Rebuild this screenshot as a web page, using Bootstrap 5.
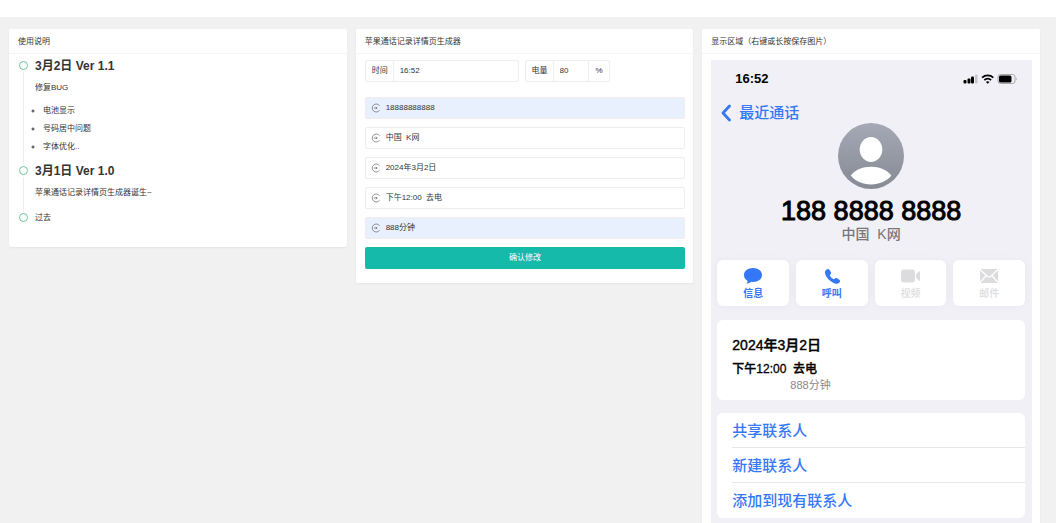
<!DOCTYPE html>
<html lang="zh-CN">
<head>
<meta charset="utf-8">
<meta name="viewport" content="width=device-width, initial-scale=1">
<title>苹果通话记录详情页生成器</title>
<link href="https://cdn.jsdelivr.net/npm/bootstrap@5.3.0/dist/css/bootstrap.min.css" rel="stylesheet">
<style>
  body { background: #f1f1f1; color: #333; font: 8px/16px "Liberation Sans", "Noto Sans CJK SC", sans-serif; scrollbar-width: none; }
  .topbar { height: 17px; background: #fff; }
  .board { display: grid; grid-template-columns: repeat(3, minmax(0, 1fr)); gap: 9px; padding: 12px 16px 0 9px; align-items: start; }
  .panel { border: 0; border-radius: 2px; color: inherit; box-shadow: 0 1px 2px rgba(0,0,0,.05); }
  .panel > .card-header { height: 25px; padding: 5px 9px 3px; background: #fff; border-bottom: 1px solid #f5f5f5; font-size: 8px; line-height: 16px; }
  .panel > .card-body { padding: 6px 8px 14px 9px; }

  /* timeline */
  .log > li { position: relative; padding: 0 0 7px 17px; }
  .log > li::before { content: ""; position: absolute; left: 5px; top: 14px; bottom: -2px; width: 1px; background: #eee; }
  .log > li:last-child::before { display: none; }
  .log > li::after { content: ""; position: absolute; left: 1px; top: 3px; width: 9px; height: 9px; border: 1px solid #6cc49a; border-radius: 50%; }
  .log h2 { font-size: 12px; line-height: 16px; font-weight: 700; margin: 0 0 6px; color: #333; }
  .log p { margin: 0 0 6px; }
  .log p:last-child { margin-bottom: 2px; }
  .log ul { padding-left: 8px; line-height: 18px; margin: 0; }

  /* form */
  .field { height: 22px; border: 1px solid #eee; border-radius: 2px; background: #fff; }
  .field label { padding: 0 5px 0 6px; line-height: 20px; }
  .field .unit { padding: 0 6px; line-height: 20px; }
  .field input { border: 0; background: transparent; color: #333; font-size: 8px; line-height: 20px; padding: 0 6px; min-width: 0; width: 100%; outline: 0; }
  .field input.ruled { border-left: 1px solid #eee; }
  .field .unit { border-left: 1px solid #eee; }
  .field svg { width: 10px; height: 10px; }
  .field.filled { background: #e8f0fe; }
  .field-time { width: 48%; margin-right: 6px; }
  .field-power { width: 85px; }
  .stack { margin-top: 15px; display: grid; gap: 8px; }
  .stack .field label { padding: 0 5px; }
  .btn-submit { height: 22px; padding: 0; border: 0; border-radius: 2px; background: #16baaa; color: #fff; font-size: 8px; line-height: 22px; }
  .btn-submit:hover { background: #14a899; color: #fff; }

  /* phone */
  .phone { background: #f1f0f6; color: #000; font-weight: 500; padding: 0 7px 10px 6px; }
  .status { height: 38px; padding: 0 6px 0 18px; font-size: 13px; font-weight: 700; }
  .back { color: #3478f6; font-size: 15px; line-height: 20px; padding: 5px 0 0 4px; text-decoration: none; }
  .avatar { width: 66px; height: 66px; }
  .number { font-size: 27px; line-height: 30px; margin-top: 7px; -webkit-text-stroke: 1px #000; }
  .place { font-size: 14px; line-height: 16px; color: #777; white-space: pre; }
  .actions { display: grid; grid-template-columns: repeat(4, 1fr); gap: 7px; margin-top: 18px; }
  .act { height: 46px; border: 0; border-radius: 6px; background: #fff; color: #3478f6; box-shadow: 0 0 8px rgba(0,0,0,.04); padding: 6px 0 5px; font-size: 10px; line-height: 14px; font-weight: 700; }
  .act:disabled { color: #dcdcde; font-weight: 500; }
  .act svg { width: 20px; height: 20px; }
  .sheet { background: #fff; border-radius: 6px; }
  .detail { margin-top: 14px; padding: 16px 15px 8px; }
  .detail h3 { font-size: 14px; line-height: 18px; font-weight: 500; margin: 0 0 6px; -webkit-text-stroke: .4px #000; }
  .detail .call { font-size: 12px; line-height: 18px; white-space: pre; -webkit-text-stroke: .3px #000; }
  .detail .length { font-size: 11px; line-height: 14px; color: #888; font-weight: 400; padding-left: 58px; }
  .links { margin-top: 13px; padding-left: 15px; }
  .links a { display: block; height: 35px; font-size: 15px; line-height: 35px; color: #3478f6; text-decoration: none; border-bottom: 1px solid #e6e6e8; }
  .links a:last-child { border-bottom: 0; }
</style>
</head>
<body>
<svg class="d-none">
  <symbol id="enter" viewBox="0 0 10 10"><path d="M8.600 2.800A4 4 0 1 0 8.600 7.200M2.800 5H6M4.800 4 6.200 5 4.800 6" fill="none" stroke="#777" stroke-width=".8"/></symbol>
</svg>
<header class="topbar"></header>
<main class="board">
  <section class="card panel">
    <div class="card-header">使用说明</div>
    <div class="card-body pt-1">
      <ul class="log list-unstyled mb-0">
        <li>
          <h2>3月2日 Ver 1.1</h2>
          <p>修复BUG</p>
          <ul><li>电池显示</li><li>号码居中问题</li><li>字体优化..</li></ul>
        </li>
        <li>
          <h2>3月1日 Ver 1.0</h2>
          <p>苹果通话记录详情页生成器诞生~</p>
        </li>
        <li>过去</li>
      </ul>
    </div>
  </section>

  <section class="card panel">
    <div class="card-header">苹果通话记录详情页生成器</div>
    <form class="card-body">
      <div class="d-flex">
        <div class="field field-time d-flex">
          <label class="flex-shrink-0" for="time">时间</label>
          <input class="ruled" id="time" type="text" value="16:52">
        </div>
        <div class="field field-power d-flex">
          <label class="flex-shrink-0" for="power">电量</label>
          <input class="ruled" id="power" type="text" value="80">
          <span class="unit">%</span>
        </div>
      </div>
      <div class="stack">
        <div class="field filled d-flex"><label class="d-flex align-items-center" for="num"><svg><use href="#enter"/></svg></label><input class="ps-0" id="num" type="text" aria-label="号码" value="18888888888"></div>
        <div class="field d-flex"><label class="d-flex align-items-center" for="place"><svg><use href="#enter"/></svg></label><input class="ps-0" id="place" type="text" aria-label="归属地" value="中国  K网"></div>
        <div class="field d-flex"><label class="d-flex align-items-center" for="date"><svg><use href="#enter"/></svg></label><input class="ps-0" id="date" type="text" aria-label="日期" value="2024年3月2日"></div>
        <div class="field d-flex"><label class="d-flex align-items-center" for="call"><svg><use href="#enter"/></svg></label><input class="ps-0" id="call" type="text" aria-label="通话" value="下午12:00  去电"></div>
        <div class="field filled d-flex"><label class="d-flex align-items-center" for="length"><svg><use href="#enter"/></svg></label><input class="ps-0" id="length" type="text" aria-label="时长" value="888分钟"></div>
        <button class="btn btn-submit w-100" type="button">确认修改</button>
      </div>
    </form>
  </section>

  <section class="card panel">
    <div class="card-header">显示区域（右键或长按保存图片）</div>
    <div class="card-body">
      <div class="phone">
        <div class="status d-flex align-items-center justify-content-between">
          <span>16:52</span>
          <svg width="57" height="12" viewBox="0 0 56 12">
            <rect x="1" y="7" width="3" height="3.500" rx="1"/><rect x="5" y="5.500" width="3" height="5" rx="1"/><rect x="8.500" y="3.500" width="3" height="7" rx="1"/><rect x="12.500" y="1.500" width="2.500" height="9" rx="1" fill="#c4c4c8"/>
            <g fill="none" stroke="#000" stroke-width="1.800"><path d="M19.600 4.600a8.200 8.200 0 0 1 11.200 0"/><path d="M21.800 7.100a5 5 0 0 1 6.800 0"/></g><path d="M25.200 10.800 23.400 9a2.600 2.600 0 0 1 3.600 0z"/>
            <rect x="35.500" y="1.500" width="17" height="9" rx="2.500" fill="none" stroke="#a5a5aa"/><rect x="36.500" y="2.500" width="12.500" height="7" rx="1.500"/><path d="M53.700 4.300q1.600 1.700 0 3.400z" fill="#a5a5aa"/>
          </svg>
        </div>
        <a class="back d-flex align-items-center" href="#"><svg class="me-2" width="10" height="18" viewBox="0 0 10 18"><path d="M8.500 2 2 9l6.500 7" fill="none" stroke="#3478f6" stroke-width="2.800" stroke-linecap="round" stroke-linejoin="round"/></svg>最近通话</a>
        <div class="text-center">
          <svg class="avatar d-block mx-auto" viewBox="0 0 66 66">
            <defs><linearGradient id="shade" x1="0" y1="0" x2="0" y2="1"><stop stop-color="#a5a9b5"/><stop offset="1" stop-color="#858a94"/></linearGradient></defs>
            <circle cx="33" cy="33" r="33" fill="url(#shade)"/><ellipse cx="33" cy="26.500" rx="11.300" ry="12.500" fill="#fff"/><path d="M12.800 52.500C17 47 24.500 43.800 33 43.800s16 3.200 20.400 8.700C49 58 41.500 61.500 33 61.500s-16-3.500-20.200-9z" fill="#fff"/>
          </svg>
          <div class="number">188 8888 8888</div>
          <div class="place">中国  K网</div>
        </div>
        <div class="actions">
          <button class="act d-flex flex-column align-items-center justify-content-between" type="button"><svg viewBox="0 0 20 20"><path d="M10 2C4.700 2 1 5 1 9c0 2.700 1.400 4.700 3.700 5.900-.1 1-.6 1.900-1.400 2.700 2 0 3.700-.7 5-1.800l1.700.1c5.300 0 9-2.900 9-6.900s-3.700-7-9-7z" fill="currentColor"/></svg>信息</button>
          <button class="act d-flex flex-column align-items-center justify-content-between" type="button"><svg viewBox="0 0 20 20"><path d="M4.500 3.600c1.200-1.100 2.200-.9 3 .3l1.300 2c.6 1 .4 1.700-.5 2.500-.7.600-.6 1 0 1.800.7 1 1.600 1.900 2.600 2.600.7.500 1.100.5 1.700-.1.900-.9 1.600-1 2.600-.4l2 1.400c1.100.8 1.200 1.700.2 2.800-1.200 1.300-2.700 1.600-4.600.9C8.500 15.900 4.500 12 3.200 8c-.6-1.900-.1-3.300 1.300-4.400z" fill="currentColor"/></svg>呼叫</button>
          <button class="act d-flex flex-column align-items-center justify-content-between" type="button" disabled><svg viewBox="0 0 20 20"><rect x="1" y="3.500" width="14" height="13" rx="3" fill="currentColor"/><path d="M16 8.300 18.700 5.600q1.300-.8 1.300.6v7.600q0 1.400-1.300.6L16 11.700z" fill="currentColor"/></svg>视频</button>
          <button class="act d-flex flex-column align-items-center justify-content-between" type="button" disabled><svg viewBox="0 0 20 20"><rect x="1" y="3" width="18" height="14" rx="1.500" fill="currentColor"/><path d="M1 3.500 8.500 10.500q1.500 1.300 3 0L19 3.500M1 16.500 7.200 9.500M19 16.500 12.800 9.500" fill="none" stroke="#fff" stroke-width="1.200"/></svg>邮件</button>
        </div>
        <div class="sheet detail">
          <h3>2024年3月2日</h3>
          <div class="call">下午12:00  去电</div>
          <div class="length">888分钟</div>
        </div>
        <nav class="sheet links">
          <a href="#">共享联系人</a>
          <a href="#">新建联系人</a>
          <a href="#">添加到现有联系人</a>
        </nav>
      </div>
    </div>
  </section>
</main>
<script src="https://cdn.jsdelivr.net/npm/bootstrap@5.3.0/dist/js/bootstrap.bundle.min.js"></script>
</body>
</html>
